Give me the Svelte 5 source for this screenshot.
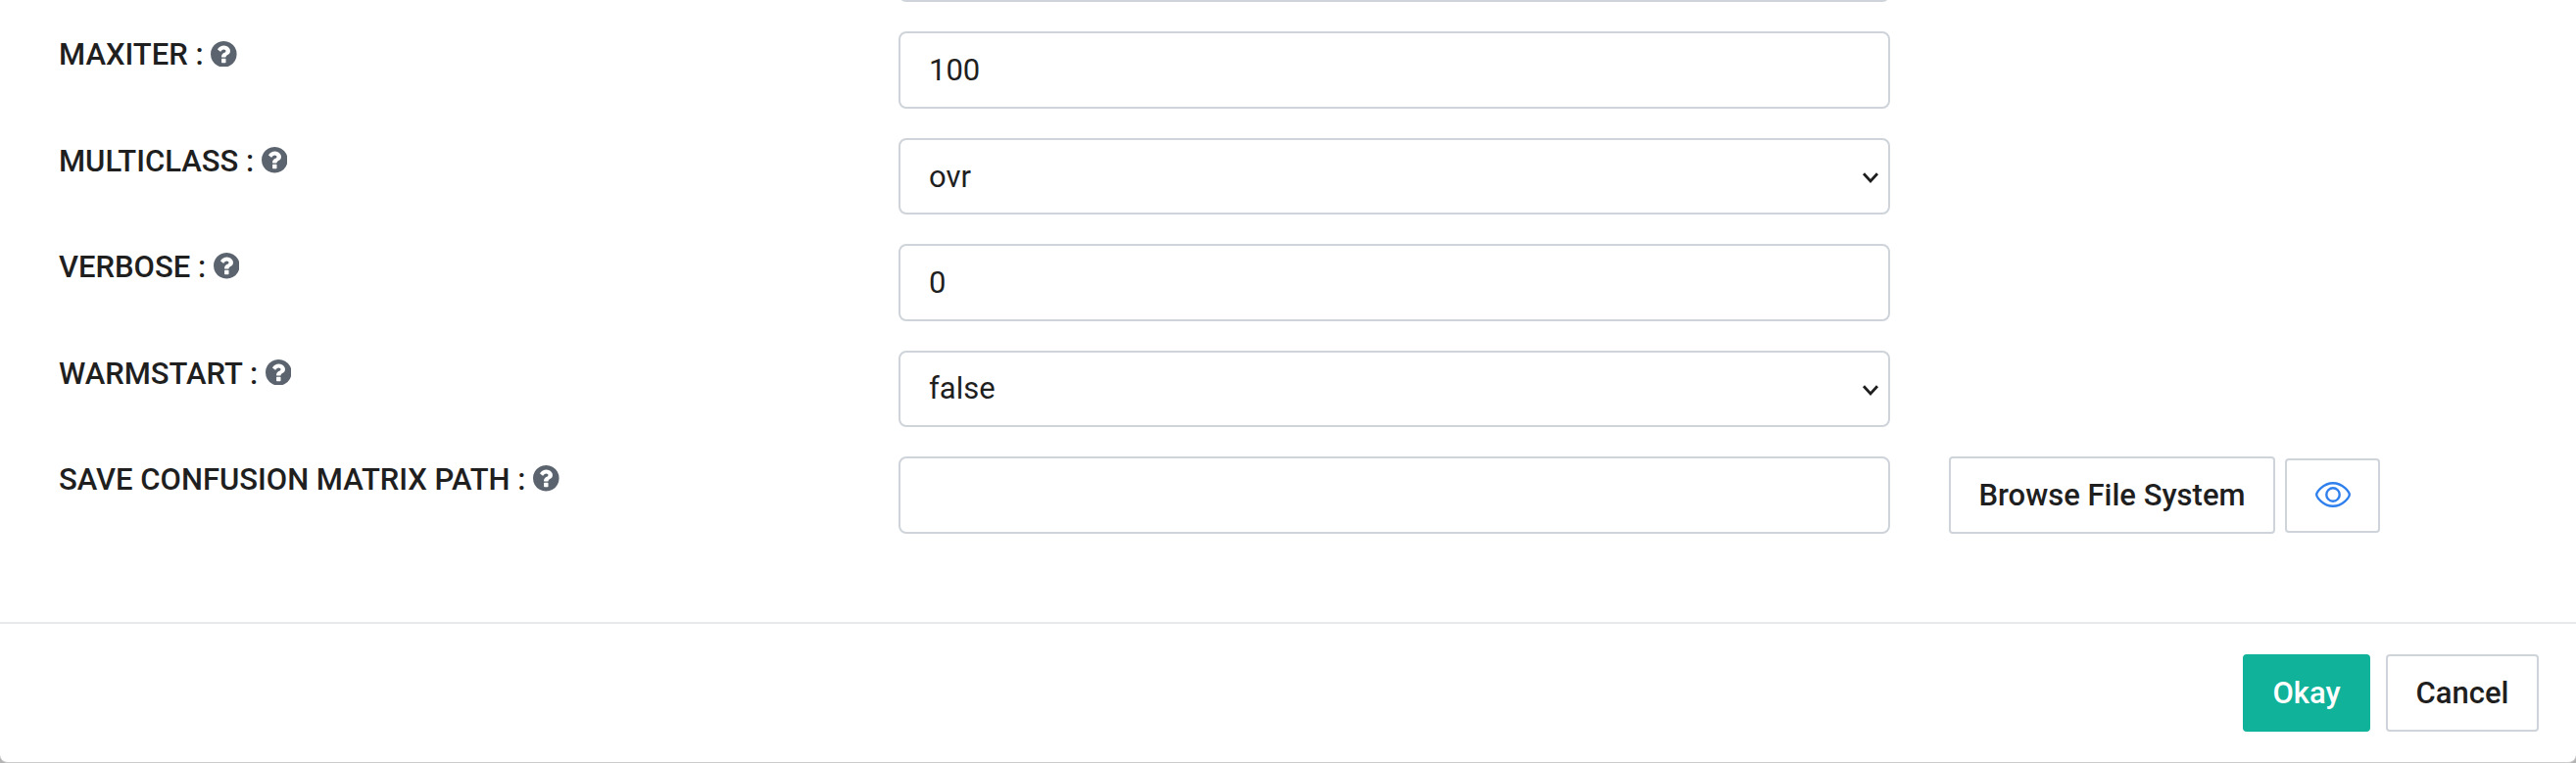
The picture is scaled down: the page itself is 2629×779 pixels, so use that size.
<script>
  const fields = [
    { label: 'MAXITER', value: '100', kind: 'input' },
    { label: 'MULTICLASS', value: 'ovr', kind: 'select' },
    { label: 'VERBOSE', value: '0', kind: 'input' },
    { label: 'WARMSTART', value: 'false', kind: 'select' },
    { label: 'SAVE CONFUSION MATRIX PATH', value: '', kind: 'path' }
  ];
</script>

<div class="backdrop">
  <div class="modal">
    <div class="body">
      <div class="control previous"></div>
      {#each fields as f}
        <div class="row">
          <div class="label">
            <span>{f.label} :</span>
            <svg class="help" viewBox="0 0 1536 1536" aria-hidden="true">
              <path fill="currentColor" d="M896 1248v-192q0-14-9-23t-23-9h-192q-14 0-23 9t-9 23v192q0 14 9 23t23 9h192q14 0 23-9t9-23zM1152 576q0-88-55.500-163t-138.500-116-170-41q-243 0-371 213-15 24 8 42l132 100q7 6 19 6 16 0 25-12 53-68 86-92 34-24 86-24 48 0 85.500 26t37.500 59q0 38-20 61t-68 45q-63 28-115.500 86.500t-52.500 125.500v36q0 14 9 23t23 9h192q14 0 23-9t9-23q0-19 21.500-49.500t54.500-49.500q32-18 49-28.500t46-35 44.500-48 28-60.500 12.500-81zM1536 768q0 209-103 385.500t-279.500 279.500-385.500 103-385.500-103-279.500-279.500-103-385.500 103-385.500 279.500-279.500 385.500-103 385.500 103 279.500 279.500 103 385.500z" />
            </svg>
          </div>
          <div class="control" class:select={f.kind === 'select'}>
            <span>{f.value}</span>
            {#if f.kind === 'select'}
              <svg class="chevron" viewBox="0 0 16 11" aria-hidden="true">
                <path d="M1 1.300L8 8.900L15 1.300" fill="none" stroke="currentColor" stroke-width="2.800" />
              </svg>
            {/if}
          </div>
          {#if f.kind === 'path'}
            <div class="actions">
              <button class="btn browse">Browse File System</button>
              <button class="btn preview" aria-label="Preview">
                <svg viewBox="0 0 36 26" aria-hidden="true">
                  <g fill="none" stroke="currentColor" stroke-width="2.400">
                    <path d="M1.200 13C1.200 10.500 8 1.200 18 1.200S34.800 10.500 34.800 13S28 24.800 18 24.800S1.200 15.500 1.200 13Z" />
                    <circle cx="18" cy="13" r="6.700" />
                  </g>
                </svg>
              </button>
            </div>
          {/if}
        </div>
      {/each}
    </div>
    <div class="footer">
      <button class="btn okay">Okay</button>
      <button class="btn cancel">Cancel</button>
    </div>
  </div>
</div>

<style>
  :global(body) {
    background: #fff;
  }
  .backdrop {
    box-sizing: border-box;
    height: 779px;
    overflow: hidden;
    background: #b4b4b4;
    font-family: Roboto, sans-serif;
    font-size: 31px;
    color: #1f1f1f;
  }
  .modal {
    box-sizing: border-box;
    height: 779px;
    background: #fff;
    border-bottom: 1px solid #ccc;
    border-radius: 0 0 8px 8px;
  }
  .body {
    box-sizing: border-box;
    height: 635px;
    overflow: hidden;
  }
  .row {
    display: grid;
    grid-template-columns: 857px 1012px 1fr;
    align-items: start;
    height: 108.400px;
    padding-left: 60px;
  }
  .label {
    display: flex;
    align-items: center;
    gap: 7.500px;
    height: 45px;
    font-weight: 500;
    white-space: pre;
  }
  .label span {
    padding-top: 2px;
  }
  .help {
    width: 26.600px;
    height: 26.600px;
    color: #5b646e;
  }
  .control {
    box-sizing: border-box;
    display: flex;
    align-items: center;
    justify-content: space-between;
    height: 78.500px;
    padding: 0 29px;
    border: 2px solid #ced4da;
    border-radius: 8px;
    background: #fff;
  }
  .previous {
    width: 1012px;
    margin: -76.500px 0 30.480px 917px;
  }
  .select {
    padding-right: 10px;
  }
  .chevron {
    width: 16px;
    height: 11px;
    margin-top: 3px;
    overflow: visible;
  }
  .actions {
    display: flex;
    align-items: center;
    gap: 10px;
    padding-left: 60px;
  }
  .btn {
    box-sizing: border-box;
    display: flex;
    align-items: center;
    justify-content: center;
    height: 79px;
    padding: 0;
    border: 2px solid #ced4da;
    border-radius: 4px;
    background: #fff;
    color: #1f1f1f;
    font: 500 31px Roboto, sans-serif;
  }
  .browse {
    width: 333px;
  }
  .preview {
    width: 97px;
    height: 76px;
    color: #2f80ed;
  }
  .preview svg {
    width: 36px;
    height: 26px;
    margin-bottom: 1px;
  }
  .footer {
    box-sizing: border-box;
    display: flex;
    justify-content: flex-end;
    gap: 16px;
    padding: 31px 38px 0 0;
    border-top: 2px solid #e6eaed;
  }
  .okay {
    width: 130px;
    border-color: #10b29a;
    background: #10b29a;
    color: #fff;
  }
  .cancel {
    width: 156px;
  }
</style>
